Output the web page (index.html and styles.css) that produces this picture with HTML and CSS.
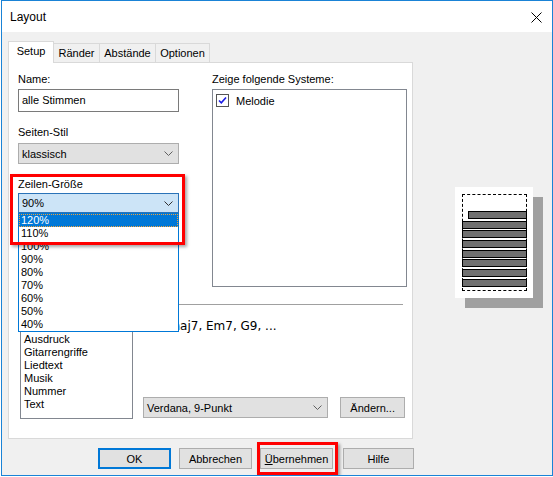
FILE: index.html
```html
<!DOCTYPE html>
<html lang="de">
<head>
<meta charset="utf-8">
<title>Layout</title>
<link rel="stylesheet" href="styles.css">
</head>
<body>
<div class="window">
  <div class="titlebar">
    <span class="title">Layout</span>
    <svg class="close" width="11" height="11" viewBox="0 0 11 11"><path d="M0.5 0.5 L10.5 10.5 M10.5 0.5 L0.5 10.5" stroke="#000" stroke-width="1" fill="none"/></svg>
  </div>
  <div class="client">
    <div class="main">
      <div class="sheet">
        <div class="tabs">
          <div class="tab active">Setup</div>
          <div class="tab">Ränder</div>
          <div class="tab">Abstände</div>
          <div class="tab">Optionen</div>
        </div>
        <div class="panel">
          <div class="top">
            <div class="col-left">
              <div class="lbl">Name:</div>
              <div class="edit">alle Stimmen</div>
              <div class="lbl gap14">Seiten-Stil</div>
              <div class="combo c-style"><span>klassisch</span><svg class="chev" width="9" height="5" viewBox="0 0 9 5"><path d="M0.5 0.5 L4.5 4.5 L8.5 0.5" stroke="#606060" fill="none"/></svg></div>
              <div class="field">
                <div class="lbl">Zeilen-Größe</div>
                <div class="combo open"><span>90%</span><svg class="chev" width="9" height="5" viewBox="0 0 9 5"><path d="M0.5 0.5 L4.5 4.5 L8.5 0.5" stroke="#303030" fill="none"/></svg>
                  <div class="droplist">
                    <div class="opt sel">120%</div>
                    <div class="opt">110%</div>
                    <div class="opt">100%</div>
                    <div class="opt">90%</div>
                    <div class="opt">80%</div>
                    <div class="opt">70%</div>
                    <div class="opt">60%</div>
                    <div class="opt">50%</div>
                    <div class="opt">40%</div>
                  </div>
                </div>
                <div class="highlight hl-size"></div>
              </div>
            </div>
            <div class="col-right">
              <div class="lbl">Zeige folgende Systeme:</div>
              <div class="listbox systems">
                <div class="check-item">
                  <span class="checkbox"><svg width="11" height="11" viewBox="0 0 11 11"><path d="M2 5.5 L4.3 7.8 L9 2.5" stroke="#1a1ae6" stroke-width="1.6" fill="none"/></svg></span>
                  <span>Melodie</span>
                </div>
              </div>
            </div>
          </div>
          <div class="sep"></div>
          <div class="bottom">
            <div class="listbox fonts">
              <div class="item"></div>
              <div class="item">Ausdruck</div>
              <div class="item">Gitarrengriffe</div>
              <div class="item">Liedtext</div>
              <div class="item">Musik</div>
              <div class="item">Nummer</div>
              <div class="item">Text</div>
            </div>
            <div class="font-side">
              <div class="sample">Cmaj7, Em7, G9, ...</div>
              <div class="font-row">
                <div class="combo c-font"><span>Verdana, 9-Punkt</span><svg class="chev" width="9" height="5" viewBox="0 0 9 5"><path d="M0.5 0.5 L4.5 4.5 L8.5 0.5" stroke="#606060" fill="none"/></svg></div>
                <div class="btn b-change">Ändern...</div>
              </div>
            </div>
          </div>
        </div>
      </div>
      <div class="preview">
        <div class="page">
          <div class="margins">
            <div class="bar indent"></div>
            <div class="bar"></div>
            <div class="bar"></div>
            <div class="bar"></div>
            <div class="bar"></div>
            <div class="bar"></div>
            <div class="bar"></div>
            <div class="bar"></div>
          </div>
        </div>
      </div>
    </div>
    <div class="buttons">
      <div class="btn default">OK</div>
      <div class="btn">Abbrechen</div>
      <div class="btn apply"><span><u>Ü</u>bernehmen</span><div class="highlight hl-apply"></div></div>
      <div class="btn help">Hilfe</div>
    </div>
  </div>
</div>
</body>
</html>
```

FILE: styles.css
```css
html, body {
  margin: 0;
  padding: 0;
  background: #ffffff;
}

body {
  font-family: "Liberation Sans", Arial, sans-serif;
  font-size: 11px;
  color: #000;
}

.window {
  margin-left: 1px;
  width: 552px;
  height: 476px;
  box-sizing: border-box;
  border: 1px solid #1a83d6;
  background: #f0f0f0;
  display: flex;
  flex-direction: column;
  overflow: hidden;
}

.titlebar {
  height: 31px;
  flex: none;
  background: #ffffff;
  display: flex;
  align-items: center;
  padding-left: 8px;
}

.title {
  font-size: 12px;
  line-height: 14px;
  margin-top: 1px;
}

.close {
  margin-left: auto;
  margin-right: 10px;
  margin-top: 1px;
}

.client {
  padding-left: 6px;
  flex: 1;
  display: flex;
  flex-direction: column;
}

.main {
  display: flex;
}

.sheet {
  width: 405px;
  flex: none;
}

.tabs {
  margin-top: 9px;
  height: 21px;
  display: flex;
  align-items: flex-end;
  position: relative;
  z-index: 2;
}

.tab {
  box-sizing: border-box;
  height: 19px;
  border: 1px solid #d9d9d9;
  border-bottom: none;
  background: #f0f0f0;
  text-align: center;
  line-height: 18px;
  margin-left: -1px;
}

.tab:nth-child(2) { width: 47px; }
.tab:nth-child(3) { width: 57px; }
.tab:nth-child(4) { width: 55px; }

.tab.active {
  margin-left: 0;
  width: 46px;
  height: 22px;
  margin-bottom: -1px;
  background: #ffffff;
  line-height: 18px;
  position: relative;
  z-index: 3;
}

.panel {
  box-sizing: border-box;
  height: 377px;
  border: 1px solid #d9d9d9;
  background: #ffffff;
  padding: 10px 0 0 9px;
  position: relative;
}

.top {
  display: grid;
  grid-template-columns: 161px 195px;
  column-gap: 33px;
  align-items: start;
}

.col-left, .col-right {
  display: flex;
  flex-direction: column;
}

.lbl {
  height: 13px;
  line-height: 13px;
  white-space: nowrap;
}

.gap14 { margin-top: 14px; }

.edit {
  margin-top: 3px;
  box-sizing: border-box;
  height: 23px;
  border: 1px solid #7a7a7a;
  padding-left: 3px;
  line-height: 21px;
  background: #fff;
}

.combo {
  box-sizing: border-box;
  height: 21px;
  border: 1px solid #adadad;
  background: #e1e1e1;
  display: flex;
  align-items: center;
  justify-content: space-between;
  padding: 0 5px 0 3px;
  position: relative;
}

.c-style { margin-top: 4px; }

.field {
  margin-top: 14px;
  position: relative;
  display: flex;
  flex-direction: column;
}

.combo.open {
  margin-top: 2px;
  height: 20px;
  background: #cce4f7;
  border-color: #2a73b8;
}

.droplist {
  position: absolute;
  left: -1px;
  right: -1px;
  top: 19px;
  box-sizing: border-box;
  height: 119px;
  border: 1px solid #0078d7;
  background: #ffffff;
  z-index: 10;
}

.opt {
  height: 13px;
  line-height: 13px;
  padding-left: 2px;
}

.opt.sel {
  background: #0078d7;
  color: #ffffff;
  outline: 1px dotted #f2a33a;
  outline-offset: -1px;
}

.highlight {
  position: absolute;
  box-sizing: border-box;
  border: 3px solid #ff0000;
  box-shadow: 2px 2px 3px rgba(0, 0, 0, 0.35);
  z-index: 20;
  pointer-events: none;
}

.hl-size {
  left: -8px;
  top: -4px;
  width: 175px;
  height: 71px;
}

.listbox {
  box-sizing: border-box;
  border: 1px solid #828790;
  background: #ffffff;
}

.systems {
  margin-top: 3px;
  height: 198px;
  padding: 3px 0 0 3px;
}

.check-item {
  display: flex;
  align-items: center;
  gap: 7px;
  height: 15px;
}

.checkbox {
  box-sizing: border-box;
  width: 13px;
  height: 13px;
  border: 1px solid #555555;
  background: #fff;
  display: flex;
  align-items: center;
  justify-content: center;
}

.sep {
  margin-top: 17px;
  width: 385px;
  height: 1px;
  background: #a0a0a0;
}

.bottom {
  margin-left: 2px;
  display: grid;
  grid-template-columns: 113px 262px;
  column-gap: 10px;
}

.fonts {
  margin-top: 12px;
  height: 102px;
  padding: 2px 0 0 3px;
}

.item {
  height: 13px;
  line-height: 13px;
}

.font-side {
  margin-top: 12px;
  height: 102px;
  display: flex;
  flex-direction: column;
  justify-content: space-between;
}

.sample {
  margin-top: 2px;
  margin-left: 17px;
  font-family: "DejaVu Sans", Verdana, sans-serif;
  font-size: 12px;
  line-height: 14px;
  white-space: nowrap;
}

.font-row {
  display: flex;
  gap: 12px;
  margin-bottom: 1px;
}

.c-font {
  width: 186px;
}

.btn {
  box-sizing: border-box;
  height: 21px;
  border: 1px solid #adadad;
  background: #e1e1e1;
  display: flex;
  align-items: center;
  justify-content: center;
  position: relative;
}

.b-change {
  width: 65px;
}

.preview {
  margin-left: 42px;
  margin-top: 155px;
}

.page {
  box-sizing: border-box;
  width: 78px;
  height: 111px;
  background: #ffffff;
  box-shadow: 10px 10px 0 #a0a0a0;
  padding: 7px 0 0 7px;
}

.margins {
  box-sizing: border-box;
  width: 65px;
  height: 97px;
  border: 1px dashed #000000;
  padding-top: 16px;
  display: flex;
  flex-direction: column;
  gap: 1.7px;
}

.bar {
  box-sizing: border-box;
  height: 8px;
  margin: 0 -1px;
  background: #707070;
  border: 1px solid #000000;
}

.bar.indent {
  margin-left: 5px;
}

.buttons {
  margin-top: 9px;
  display: flex;
  padding-left: 90px;
}

.buttons .btn {
  width: 73px;
  margin-right: 8px;
}

.buttons .btn.help {
  width: 71px;
  margin-left: 2px;
  margin-right: 0;
}

.btn.default {
  border: 2px solid #0078d7;
}

.hl-apply {
  left: -4px;
  top: -7px;
  width: 81px;
  height: 33px;
}
```
